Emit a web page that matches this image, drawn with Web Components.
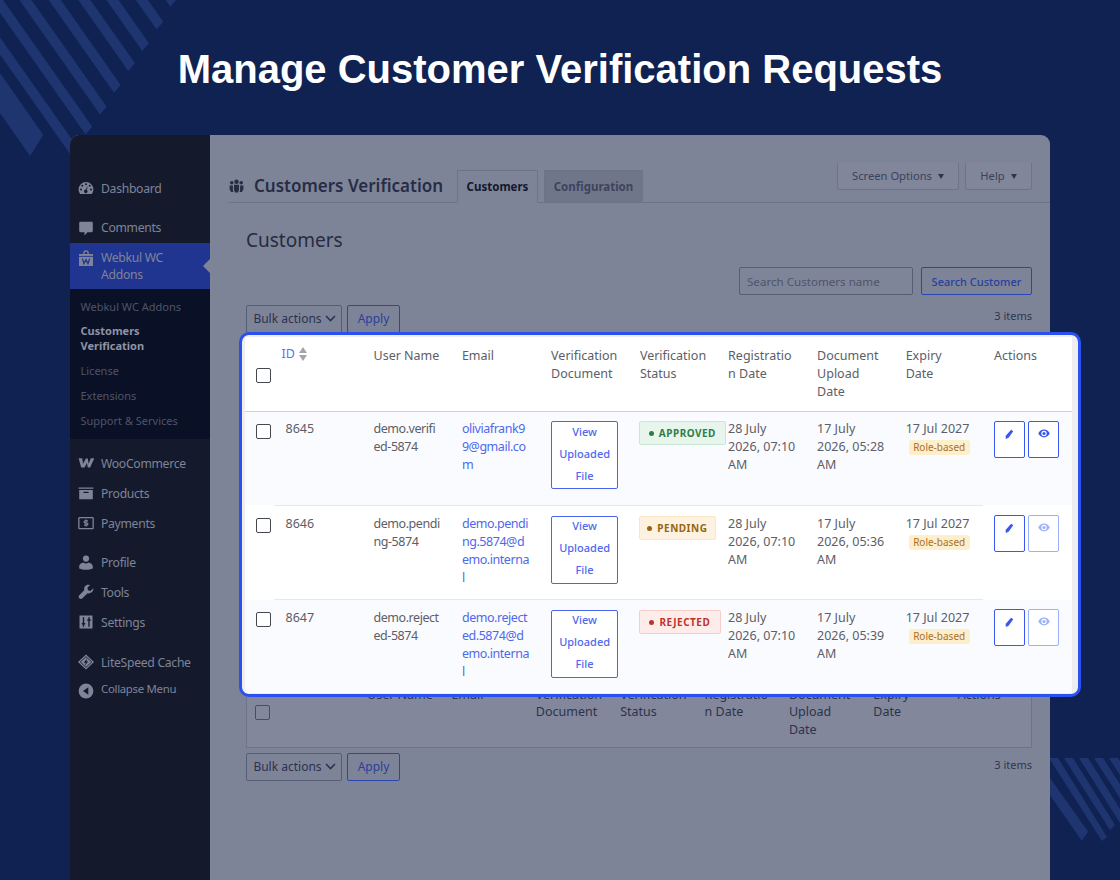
<!DOCTYPE html>
<html lang="en"><head><meta charset="utf-8"><title>Manage Customer Verification Requests</title>
<style>html,body{margin:0;padding:0;background:#0f2252}</style></head>
<body>
<x-stage>
  <x-sidebar slot="side">
    <x-nav-item icon="dash" style="height:34px">Dashboard</x-nav-item>
    <x-nav-item icon="comment" style="margin-top:7px;height:31px">Comments</x-nav-item>
    <x-nav-item icon="bag" active style="height:46px">Webkul WC<br>Addons</x-nav-item>
    <x-sub-menu>
      <x-sub-item style="min-height:24px">Webkul WC Addons</x-sub-item>
      <x-sub-item current>Customers<br>Verification</x-sub-item>
      <x-sub-item>License</x-sub-item>
      <x-sub-item>Extensions</x-sub-item>
      <x-sub-item>Support &amp; Services</x-sub-item>
    </x-sub-menu>
    <x-nav-item icon="woo" style="margin-top:9px">WooCommerce</x-nav-item>
    <x-nav-item icon="box">Products</x-nav-item>
    <x-nav-item icon="pay">Payments</x-nav-item>
    <x-nav-item icon="user" style="margin-top:9px">Profile</x-nav-item>
    <x-nav-item icon="tool">Tools</x-nav-item>
    <x-nav-item icon="set">Settings</x-nav-item>
    <x-nav-item icon="lite" style="margin-top:10px">LiteSpeed Cache</x-nav-item>
    <x-nav-item icon="collapse" small style="height:24px">Collapse Menu</x-nav-item>
  </x-sidebar>
  <x-admin slot="main"></x-admin>
  <x-verify-card slot="over">
    <x-verify-row uid="8645" user="demo.verifi|ed-5874" mail="oliviafrank9|9@gmail.co|m" status="approved" up="17 July|2026, 05:28|AM" eye="1"></x-verify-row>
    <x-verify-row uid="8646" user="demo.pendi|ng-5874" mail="demo.pendi|ng.5874@d|emo.interna|l" status="pending" up="17 July|2026, 05:36|AM" alt="1" shift="1"></x-verify-row>
    <x-verify-row uid="8647" user="demo.reject|ed-5874" mail="demo.reject|ed.5874@d|emo.interna|l" status="rejected" up="17 July|2026, 05:39|AM" shift="1"></x-verify-row>
  </x-verify-card>
</x-stage>
<script>
const FONT = '"Noto Sans","Open Sans",sans-serif';
const ICONS = {
  dash:'<path d="M8 2a7.4 7.4 0 0 0-7.4 7.4c0 1.7.6 3.3 1.6 4.6h11.6a7.4 7.4 0 0 0 1.6-4.6A7.4 7.4 0 0 0 8 2z"/><g fill="var(--bg)"><circle cx="8" cy="4.2" r="1"/><circle cx="4.3" cy="5.7" r="1"/><circle cx="11.7" cy="5.7" r="1"/><circle cx="3" cy="9.4" r="1"/><circle cx="13" cy="9.4" r="1"/><path d="M9.9 6.1 8.7 10a1.7 1.7 0 1 1-1.3-.2z"/></g>',
  comment:'<path d="M2.6 1.8h10.8c.9 0 1.4.5 1.4 1.4v7.6c0 .9-.5 1.4-1.4 1.400H9.500l-3 3.400v-3.400H2.600c-.9 0-1.400-.5-1.400-1.400V3.200c0-.9.5-1.400 1.400-1.400z"/>',
  bag:'<path d="M5.200 4.200V3a2.800 2.800 0 0 1 5.600 0v1.200H9.500V3a1.500 1.500 0 0 0-3 0v1.200z"/><path d="M1 4h14v12H1z"/><path d="M1 6.400h14" stroke="var(--bg)" stroke-width=".9"/><path d="M4.400 8.600l1.600 5 2-4 2 4 1.600-5" fill="none" stroke="var(--bg)" stroke-width="1.300"/>',
  woo:'<path d="M.6 3.200h3.600l.9 5.600 2.700-5.200h2l.8 5.200 2.200-5.600h3.600l-4.300 9.400H9.800L8.900 7.900l-2.300 4.700H3.200z"/>',
  box:'<path d="M.6 2.400h14.800v1.300H.6zM1.200 5h13.600v9.200H1.200z"/><path d="M5.400 7.400h5.200" stroke="var(--bg)" stroke-width="1.200"/>',
  pay:'<rect x=".9" y="2.200" width="15.200" height="11.800" rx=".8" fill="none" stroke="currentColor" stroke-width="1.400"/><path d="M10.600 5.700H7.500c-1.200 0-1.300 2.300 0 2.300h2c1.300 0 1.200 2.300 0 2.300H6.400M8.500 4.200v7.600" fill="none" stroke="currentColor" stroke-width="1.300"/>',
  user:'<circle cx="8" cy="4.600" r="3.100"/><path d="M1.200 14.600v-2.200c0-2 2.600-3.600 4.100-3.800.8.6 1.700.9 2.700.9s1.900-.3 2.700-.9c1.500.2 4.100 1.800 4.100 3.800v2.200c-2 .9-4.300 1.200-6.800 1.200s-4.800-.3-6.800-1.200z"/>',
  tool:'<path d="M15.300 4.200l-2.800 2.700-2.500-.6-.6-2.500L12 1.100c-1.900-.8-4-.2-5.100 1.300-.8 1.100-1 2.500-.5 3.700L1.300 11.200c-.9.900-.9 2.200 0 3.100s2.300.9 3.100 0l5.200-5.100c1.200.4 2.600.2 3.700-.6 1.600-1.100 2.200-2.600 2-4.400z"/>',
  set:'<path d="M1.500 1.500h13v13h-13z"/><path d="M5.500 3.200v9.600M11 3.200v9.600M3.800 9.700h3.400M9.300 6h3.400" stroke="var(--bg)" stroke-width="1.400" fill="none"/>',
  lite:'<path d="M8.500 0 17 8l-8.500 8L0 8z"/><path d="M8.500 2.300 14.600 8l-6.100 5.700L2.400 8z" fill="none" stroke="var(--bg)" stroke-width=".9"/><path d="M9.800 3.800 6.200 8.700h2l-1 3.500 3.600-4.900h-2z" fill="var(--bg)"/>',
  collapse:'<circle cx="8" cy="8" r="7.400"/><path d="M10.300 4.300v7.400L5 8z" fill="var(--bg)"/>'
};
function svg(n,w=16,h=16){const vb=n==='lite'||n==='pay'?'0 0 17 16':'0 0 16 16';return `<svg width="${w}" height="${h}" viewBox="${vb}" fill="currentColor" aria-hidden="true">${ICONS[n]}</svg>`}
function def(name,html){customElements.define(name,class extends HTMLElement{constructor(){super();this.attachShadow({mode:'open'})}connectedCallback(){this.shadowRoot.innerHTML=typeof html==='function'?html(this):html}})}
const lines=s=>(s||'').split('|').join('<br>');
const stripe=(cx,cy)=>{const t=[cx-6.7,cy+7.7],L=190,d=[-L,-L*1.42];return `<polygon points="${cx},${cy} ${t[0]},${t[1]} ${t[0]+d[0]},${t[1]+d[1]} ${cx+d[0]},${cy+d[1]}"/>`};
const TL=[[177,-1],[163.3,21.7],[149,43.3],[135,63.3],[120.7,85],[106.7,106.7],[92.3,126.7],[78,148]].map(c=>stripe(c[0],c[1])).join('');

def('x-stage',`<style>
:host{display:block;position:relative;width:1120px;height:880px;overflow:hidden;background:#0f2252;font-family:${FONT}}
.deco{position:absolute;left:0;top:0;pointer-events:none}
h1{position:relative;margin:0;height:135px;display:flex;align-items:center;justify-content:center;font:700 40px/46px "Liberation Sans",Arial,sans-serif;color:#fff;padding-top:3px;box-sizing:border-box}
.win{position:relative;margin:0 70px;height:760px;display:flex;border-radius:9px 9px 0 0;overflow:hidden;background:#7e8497}
</style>
<svg class="deco" width="1120" height="880" fill="#1e3570">
${TL}
<polygon points="0,73 43.300,135 30,156 0,113"/>
<polygon points="1049,758 1058,758 1107,837 1102,841"/>
<polygon points="1064,758 1073,758 1115,825 1110,830"/>
<polygon points="1079,758 1088,758 1125,817 1125,831"/>
<polygon points="1094,758 1103,758 1125,792 1125,806"/>
<polygon points="1109,758 1118,758 1125,769 1125,783"/>
<polygon points="1050,778 1088.300,831.700 1081.700,840.700 1050,795"/>
</svg>
<h1>Manage Customer Verification Requests</h1>
<div class="win"><slot name="side"></slot><slot name="main"></slot></div>
<slot name="over"></slot>`);

def('x-sidebar',`<style>
:host{display:block;width:140px;flex:none;background:#141a2c;padding-top:36px;box-sizing:border-box}
</style><slot></slot>`);

def('x-nav-item',h=>{const a=h.hasAttribute('active'),s=h.hasAttribute('small');return `<style>
:host{display:block;height:30px;--bg:${a?'#1f3590':'#141a2c'}}
.r{position:relative;height:100%;display:flex;align-items:center;background:var(--bg);color:#7f8498;font-size:${s?'11.4px':'12.2px'};letter-spacing:-.3px;line-height:17px}
.i{width:31px;flex:none;display:flex;justify-content:center;box-sizing:border-box;${a?'align-self:flex-start;margin-top:7px;':''}${s?'margin-top:4px;':''}}
.t{${s?'margin-top:-1px':''}}
.a{position:absolute;right:0;top:16px;width:0;height:0;border:7px solid transparent;border-left:0;border-right-color:#7e8497;}
</style><div class="r"><span class="i">${svg(h.getAttribute('icon'))}</span><span class="t"><slot></slot></span>${a?'<i class="a"></i>':''}</div>`});

def('x-sub-menu',`<style>:host{display:block;background:#0a1025;height:150px;padding-top:5px;box-sizing:border-box}</style><slot></slot>`);
def('x-sub-item',h=>{const c=h.hasAttribute('current');return `<style>
:host{display:flex;align-items:center;min-height:25px;padding-left:10.5px;font-size:11px;line-height:15px;color:${c?'#8f94a6':'#4f5468'};font-weight:${c?700:400};${c?'margin:5px 0 4.500px':''}}
</style><span><slot></slot></span>`});

const team='<svg width="15" height="14" viewBox="0 0 15 14" fill="currentColor" aria-hidden="true"><circle cx="7.500" cy="2.700" r="2.200"/><circle cx="2.800" cy="3.800" r="1.800"/><circle cx="12.200" cy="3.800" r="1.800"/><path d="M5 5.800h5v5.200l-1 2.600H6L5 11zM.6 6.400h3.300v4.800l.5 1.800H2.200L.6 10.500zM14.400 6.400h-3.300v4.800l-.5 1.800h2.200l1.600-2.500z"/></svg>';
const bulk=`<div class="bulk"><span class="sel">Bulk actions <svg width="11" height="7" viewBox="0 0 11 7" fill="none" stroke="currentColor" stroke-width="1.600"><path d="M1 1l4.500 4.500L10 1"/></svg></span><span class="apply">Apply</span></div>`;
def('x-admin',`<style>
:host{display:block;flex:1;min-width:0;padding-top:28px;color:#2a3149;font-size:12.500px;box-sizing:border-box}
.head{display:flex;margin-left:18px;height:40px;box-sizing:border-box;border-bottom:1px solid #6e7488;align-items:flex-end}
.ti{display:flex;align-items:center;align-self:flex-start;margin-top:12px;gap:11px;font-size:17px;line-height:22px;font-weight:600;color:#262d45;width:229px;white-space:nowrap}
.ti svg{color:#252c44;flex:none;margin-left:1px}
.ti span{margin-left:-1px}
.tab{height:31px;margin-bottom:-1px;display:flex;align-items:center;justify-content:center;border:1px solid #6e7488;box-sizing:content-box;font-size:11.500px;font-weight:700;color:#12182e;background:#7e8497;border-bottom-color:#7e8497;width:79px}
.tab+.tab{margin-left:6px;background:#707689;color:#3d445e;border-bottom-color:#6e7488;width:97px}
.top{margin-left:auto;margin-right:18px;align-self:flex-start;display:flex;gap:6px}
.top span{height:27px;box-sizing:border-box;border:1px solid #6e7488;border-top:0;border-radius:0 0 3px 3px;background:#81869a;color:#3b425b;font-size:11.200px;display:flex;align-items:center;justify-content:center;gap:6px;padding-bottom:1px}
.top span::after{content:"";border:3.500px solid transparent;border-top:5px solid #2e3550;border-bottom:0;margin-top:1px}
.so{width:122px}.he{width:67px}
.body{padding:0 18px 0 36px}
h2{margin:0;font-weight:400;font-size:19px;line-height:28px;color:#252c44;padding-top:23px;height:64px;box-sizing:border-box}
.search{display:flex;justify-content:flex-end;gap:8px;height:28px}
.inp{width:174px;box-sizing:border-box;border:1px solid #575d74;border-radius:2px;color:#4e546b;display:flex;align-items:center;padding-left:7px;font-size:11.600px;background:#7f8598}
.btn{width:111px;box-sizing:border-box;border:1px solid #2a46b0;border-radius:2px;color:#2a3e9e;display:flex;align-items:center;justify-content:center;font-size:11px;font-weight:500}
.nav{display:flex;justify-content:space-between;margin-top:10px;height:27px}
.bulk{display:flex;gap:5px}
.sel{width:96px;height:28px;box-sizing:border-box;border:1px solid #575d74;border-radius:2px;display:flex;align-items:center;justify-content:center;gap:3px;color:#2b3250;font-size:12px;white-space:nowrap;padding:0 0 2px 1px}
.apply{width:53px;height:28px;box-sizing:border-box;border:1px solid #2a46b0;border-radius:2px;color:#2a3e9e;display:flex;align-items:center;justify-content:center;font-size:12px;padding-bottom:2px}
.cnt{font-size:11px;color:#2f3650;line-height:22px}
.tbl{margin-top:3px;height:413px;box-sizing:border-box;border:1px solid #6e7488;background:#82879b;display:grid;grid-template-columns:8px 112px repeat(8,84.400px);align-items:start;align-content:end;line-height:17.500px;color:#2c334c;padding-bottom:9px}
.cb{width:15px;height:15px;box-sizing:border-box;border:1px solid #474d63;border-radius:2px;margin:19px 0 0 0}
.foot{display:flex;justify-content:space-between;margin-top:5px}
.foot .cnt{line-height:24px}
</style>
<div class="head"><div class="ti">${team}<span>Customers Verification</span></div><div class="tab">Customers</div><div class="tab">Configuration</div><div class="top"><span class="so">Screen Options</span><span class="he">Help</span></div></div>
<div class="body">
<h2>Customers</h2>
<div class="search"><div class="inp">Search Customers name</div><div class="btn">Search Customer</div></div>
<div class="nav">${bulk}<div class="cnt">3 items</div></div>
<div class="tbl"><div></div><div><div class="cb"></div></div><div>User Name</div><div>Email</div><div>Verification<br>Document</div><div>Verification<br>Status</div><div>Registratio<br>n Date</div><div>Document<br>Upload<br>Date</div><div>Expiry<br>Date</div><div>Actions</div></div>
<div class="foot">${bulk}<div class="cnt">3 items</div></div>
</div>`);

const COLS='grid-template-columns:29px 100px 88.400px 89.200px 88.800px 88.200px 89px 88.600px 88.400px 78px';
def('x-verify-card',`<style>
:host{position:absolute;left:239px;top:332px;width:842px;height:364.500px;box-sizing:border-box;border:3.500px solid #2a50f0;border-radius:10px;background:#eeeef0;overflow:hidden;padding:2px 0 0 2.500px}
.t{width:827px;background:#fff;color:#5c5e68;font-size:12.500px;line-height:18px}
.hd{display:grid;${COLS};border-bottom:1px solid #cfd0d6;box-sizing:border-box;height:75px;padding-top:10px}
.id{color:#5a72f0;display:flex;gap:3px;margin-left:8px;align-items:flex-start;margin-top:-2px}
.cb{width:15px;height:15px;box-sizing:border-box;border:1.200px solid #46484f;border-radius:2px;margin:21px 0 0 11px;background:#fff}
</style>
<div class="t"><div class="hd"><div><div class="cb"></div></div><div class="id">ID <svg width="10" height="16" viewBox="0 0 10 16" fill="#a3a5ae" style="margin-top:1px"><path d="M5 1l4 6H1zM5 15 1 9h8z"/></svg></div><div>User Name</div><div>Email</div><div>Verification<br>Document</div><div>Verification<br>Status</div><div>Registratio<br>n Date</div><div>Document<br>Upload<br>Date</div><div>Expiry<br>Date</div><div>Actions</div></div>
<slot></slot></div>`);

const BADGE={approved:['APPROVED','#e8f5ec','#c9e7d3','#2f7d49',87],pending:['PENDING','#fdf2e0','#fae6c4','#98640f',77],rejected:['REJECTED','#fdecea','#f6cdc9','#bd3328',82]};
const PEN='<svg width="9" height="10" viewBox="0 0 10 11" fill="currentColor"><path d="M6.800.8l2.400 1.700L4 9.700 1 11l-.4-3.300z"/></svg>';
const EYE='<svg width="12" height="9" viewBox="0 0 13 9" fill="currentColor"><path d="M6.500.3C3.800.3 1.500 2 .3 4.500c1.200 2.500 3.500 4.200 6.200 4.200s5-1.700 6.200-4.200C11.500 2 9.200.3 6.500.3zm0 1.300a2.900 2.900 0 1 1 0 5.800 2.900 2.900 0 0 1 0-5.800z"/><circle cx="6.500" cy="4.500" r="1.700"/></svg>';
def('x-verify-row',h=>{const g=n=>h.getAttribute(n);const b=BADGE[g('status')];const eye=g('eye');const sep=g('status')!=='rejected';const d=g('shift')?1:0;return `<style>
:host{display:block}
.r{display:grid;${COLS};height:93px;background:${g('alt')?'#fff':'#fafbfe'};padding-top:8px;box-sizing:border-box;overflow:hidden}
.s{margin-top:${d}px}
.cb{width:15px;height:15px;box-sizing:border-box;border:1.200px solid #46484f;border-radius:2px;margin:4px 0 0 11px;background:#fff}
.num{margin-left:12px}
.tight{letter-spacing:-.45px}
a{color:#4f68ee;text-decoration:none}
.doc{width:67px;height:68px;margin-top:${1+d}px;box-sizing:border-box;border:1px solid #4a64ec;border-radius:2px;color:#4f68ee;font-size:11px;line-height:22px;text-align:center;font-weight:500;background:#fff;overflow:hidden}
.doc span{display:block;margin-top:${-1-d}px}
.b{width:${b[4]}px;height:24px;margin:${1+d}px 0 0 -1px;box-sizing:border-box;background:${b[1]};border:1px solid ${b[2]};border-radius:2px;color:${b[3]};font-size:10px;font-weight:700;letter-spacing:.5px;display:flex;align-items:center;justify-content:center;gap:5px;white-space:nowrap}
.b::before{content:"";width:5px;height:5px;border-radius:50%;background:currentColor}
.pill{display:block;width:61px;margin:2px 0 0 3px;height:15px;background:#fcefc9;color:#ab6e2f;font-size:10px;line-height:15px;text-align:center;border-radius:3px}
.acts{display:flex;gap:3px;margin-top:1px}
.ac{width:31px;height:37px;box-sizing:border-box;border:1px solid #3a58f0;border-radius:2px;color:#3a58f0;display:flex;justify-content:center;align-items:flex-start;padding-top:7px;background:#fff}
.ac.off{border-color:#9db0fb;color:#9db0fb}
</style>
<div class="r"><div><div class="cb"></div></div><div class="num s">${g('uid')}</div><div class="s tight">${lines(g('user'))}</div><div class="s tight"><a>${lines(g('mail'))}</a></div><div><div class="doc"><span>View<br>Uploaded<br>File</span></div></div><div><div class="b">${b[0]}</div></div><div class="s">28 July<br>2026, 07:10<br>AM</div><div class="s">${lines(g('up'))}</div><div class="s">17 Jul 2027<span class="pill">Role-based</span></div><div class="acts"><div class="ac">${PEN}</div><div class="ac${eye?'':' off'}">${EYE}</div></div></div>${sep?'<div style="height:1px;width:709px;margin-left:29px;background:#e7e8ee"></div>':''}`});
</script>
</body></html>
